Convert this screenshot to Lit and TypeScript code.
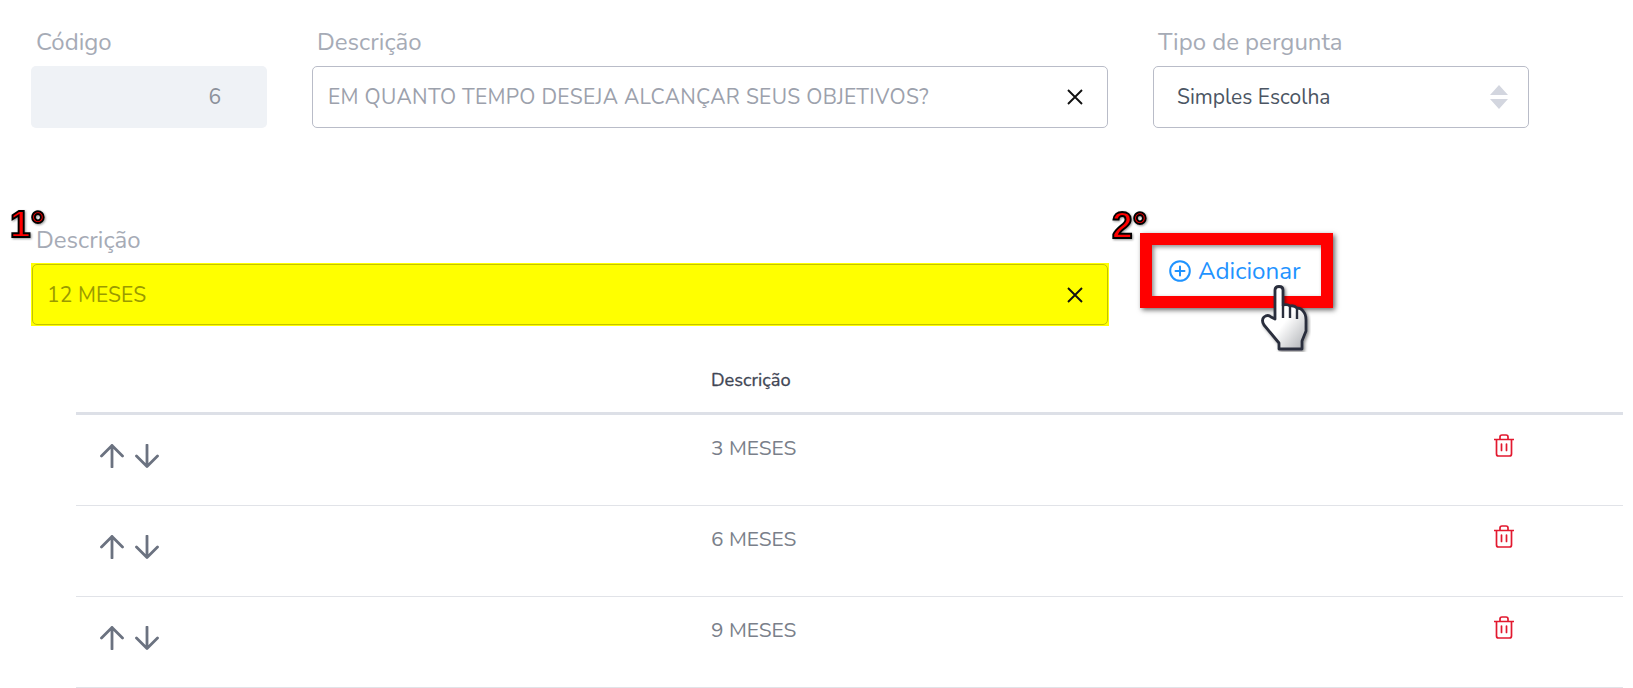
import { LitElement, html, css, svg } from "lit";
import { customElement } from "lit/decorators.js";

const xIcon = html`<svg class="x" viewBox="0 0 18 18" width="18" height="18"><path d="M2 2 L16 16 M16 2 L2 16" stroke="#111" stroke-width="1.9" fill="none"/></svg>`;

const up = html`<svg viewBox="0 0 24 24" width="24" height="24"><path d="M12 23 V1.5 M1.5 12 L12 1.5 L22.5 12" stroke="#6b7280" stroke-width="2.8" fill="none" stroke-linecap="round" stroke-linejoin="round"/></svg>`;
const down = html`<svg viewBox="0 0 24 24" width="24" height="24"><path d="M12 1 V22.5 M1.5 12 L12 22.5 L22.5 12" stroke="#6b7280" stroke-width="2.8" fill="none" stroke-linecap="round" stroke-linejoin="round"/></svg>`;
const trash = html`<svg viewBox="0 0 20 23" width="20" height="23"><path d="M0.5 5.5 H19.5 M2.5 5.5 V20 Q2.5 22 4.5 22 H15.5 Q17.5 22 17.5 20 V5.5 M6 5.5 V3 Q6 1 8 1 H12 Q14 1 14 3 V5.5 M7.5 10 V16.5 M12.5 10 V16.5" stroke="#e2192f" stroke-width="1.7" fill="none" stroke-linecap="round"/></svg>`;

const hand = svg`<defs><linearGradient id="hg" x1="0.2" y1="0.2" x2="0.9" y2="1"><stop offset="0.45" stop-color="#ffffff"/><stop offset="1" stop-color="#b4b6ba"/></linearGradient><filter id="hs" x="-20%" y="-20%" width="150%" height="150%"><feDropShadow dx="1.5" dy="1.5" stdDeviation="1.5" flood-color="#000" flood-opacity="0.45"/></filter></defs>
<path filter="url(#hs)" fill="url(#hg)" stroke="#2a2f3d" stroke-width="2.8" stroke-linejoin="round" d="M14 34 V5 Q14 1.5 18 1.5 Q22 1.5 22 5 V20 Q27 19 29 21 Q33 20 36 23 Q40 23 42 26 Q45 29 45 35 V46 L41 56 V64 H18 V58 L3 40 Q0 35 3 32 Q7 29 10 32 Z"/>
<path d="M22 20 V33 M29 21 V33 M36 23 V34" stroke="#2a2f3d" stroke-width="2.4" fill="none"/>`;

@customElement("app-root")
export class AppRoot extends LitElement {
  static styles = css`
    :host { display: block; width: 1633px; height: 688px; overflow: hidden; position: relative; background: #fff; font-family: "Nunito", "Lato", sans-serif; font-size: 21px; color: #6b7280; }
    .row { display: flex; padding-left: 31px; }
    .top { padding-top: 27px; }
    .second { padding-top: 97px; }
    label { display: block; height: 30px; line-height: 30px; margin-left: 5px; margin-bottom: 9px; color: #a6abb6; font-size: 24px; }
    .second label { margin-bottom: 8px; }
    .code { width: 236px; margin-right: 45px; }
    .desc { width: 796px; margin-right: 45px; }
    .tipo { width: 376px; }
    .box { box-sizing: border-box; height: 62px; border: 1px solid #b9bcc8; border-radius: 5px; display: flex; align-items: center; padding: 0 23px 0 15px; }
    .ro { border: none; background: #eff2f6; justify-content: flex-end; padding-right: 46px; color: #8b909b; }
    .val { flex: 1; white-space: nowrap; color: #9ca1ac; letter-spacing: 0.31px; }
    .sel { padding: 0 20px 0 23px; }
    .sel .val { color: #4b5563; font-size: 21px; letter-spacing: 0; }
    .hl { background: #ffff00; padding: 1px; width: 1078px; box-sizing: border-box; }
    .hl .box { border-color: #c4c400; height: 61px; padding-left: 14px; }
    .hl .val { color: #9a9a00; letter-spacing: 0.1px; }
    .f2 { width: 1078px; }
    .add { margin: 32px 0 0 60px; display: flex; align-items: center; gap: 7px; height: 30px; color: #1f93ff; font-size: 24.2px; line-height: 30px; white-space: nowrap; }
    .add svg { display: block; margin-top: -2px; }
    .table { margin: 0 10px 0 76px; padding-top: 25px; }
    .g { display: grid; grid-template-columns: 635px 783px 1fr; }
    .head { box-sizing: border-box; height: 64px; padding-bottom: 4px; align-items: center; border-bottom: 3px solid #dde0e7; font-size: 18.3px; font-weight: 400; color: #3f4654; -webkit-text-stroke: 0.3px #3f4654; }
    .r { box-sizing: border-box; height: 91px; border-bottom: 1px solid #e1e3e8; color: #7a7f8a; }
    .t { padding-top: 18px; line-height: 30px; font-size: 20.9px; }
    .arrows { display: flex; gap: 11px; padding: 29px 0 0 24px; }
    .arrows svg { display: block; }
    .del { padding-top: 19px; }
    .del svg { display: block; }
    .mark { position: absolute; font-family: "Liberation Sans", sans-serif; font-weight: 700; font-size: 37px; line-height: 37px; color: #f00; -webkit-text-stroke: 1.9px #000; filter: drop-shadow(1px 1px 1px rgba(0,0,0,.4)); }
    .m1 { left: 10px; top: 206px; }
    .m2 { left: 1112px; top: 207px; }
    .redbox { position: absolute; left: 1140px; top: 233px; width: 193px; height: 75px; box-sizing: border-box; border: 12px solid #f00; box-shadow: 2px 2px 5px rgba(0,0,0,.6), inset 2px 2px 4px rgba(0,0,0,.45); }
    .hand { position: absolute; left: 1261px; top: 285px; }
  `;

  render() {
    const rows = ["3 MESES", "6 MESES", "9 MESES"];
    return html`
      <div class="row top">
        <div class="code"><label>Código</label><div class="box ro">6</div></div>
        <div class="desc"><label>Descrição</label><div class="box"><span class="val">EM QUANTO TEMPO DESEJA ALCANÇAR SEUS OBJETIVOS?</span>${xIcon}</div></div>
        <div class="tipo"><label>Tipo de pergunta</label><div class="box sel"><span class="val">Simples Escolha</span>
          <svg viewBox="0 0 18 24" width="18" height="24"><path d="M9 0 L18 10 H0 Z M9 24 L18 14 H0 Z" fill="#d3d6df"/></svg></div></div>
      </div>
      <div class="row second">
        <div class="f2"><label>Descrição</label><div class="hl"><div class="box"><span class="val">12 MESES</span>${xIcon}</div></div></div>
        <div class="add"><svg viewBox="0 0 22 22" width="22" height="22"><circle cx="11" cy="11" r="9.8" stroke="#1f93ff" stroke-width="2" fill="none"/><path d="M11 6.5 V15.5 M6.5 11 H15.5" stroke="#1f93ff" stroke-width="2" stroke-linecap="round"/></svg>Adicionar</div>
      </div>
      <div class="table">
        <div class="g head"><span></span><span>Descrição</span><span></span></div>
        ${rows.map((t) => html`<div class="g r"><div class="arrows">${up}${down}</div><div class="t">${t}</div><div class="del">${trash}</div></div>`)}
      </div>
      <div class="mark m1">1°</div>
      <div class="mark m2">2°</div>
      <div class="redbox"></div>
      <svg class="hand" viewBox="0 0 50 67" width="50" height="67">${hand}</svg>
    `;
  }
}
